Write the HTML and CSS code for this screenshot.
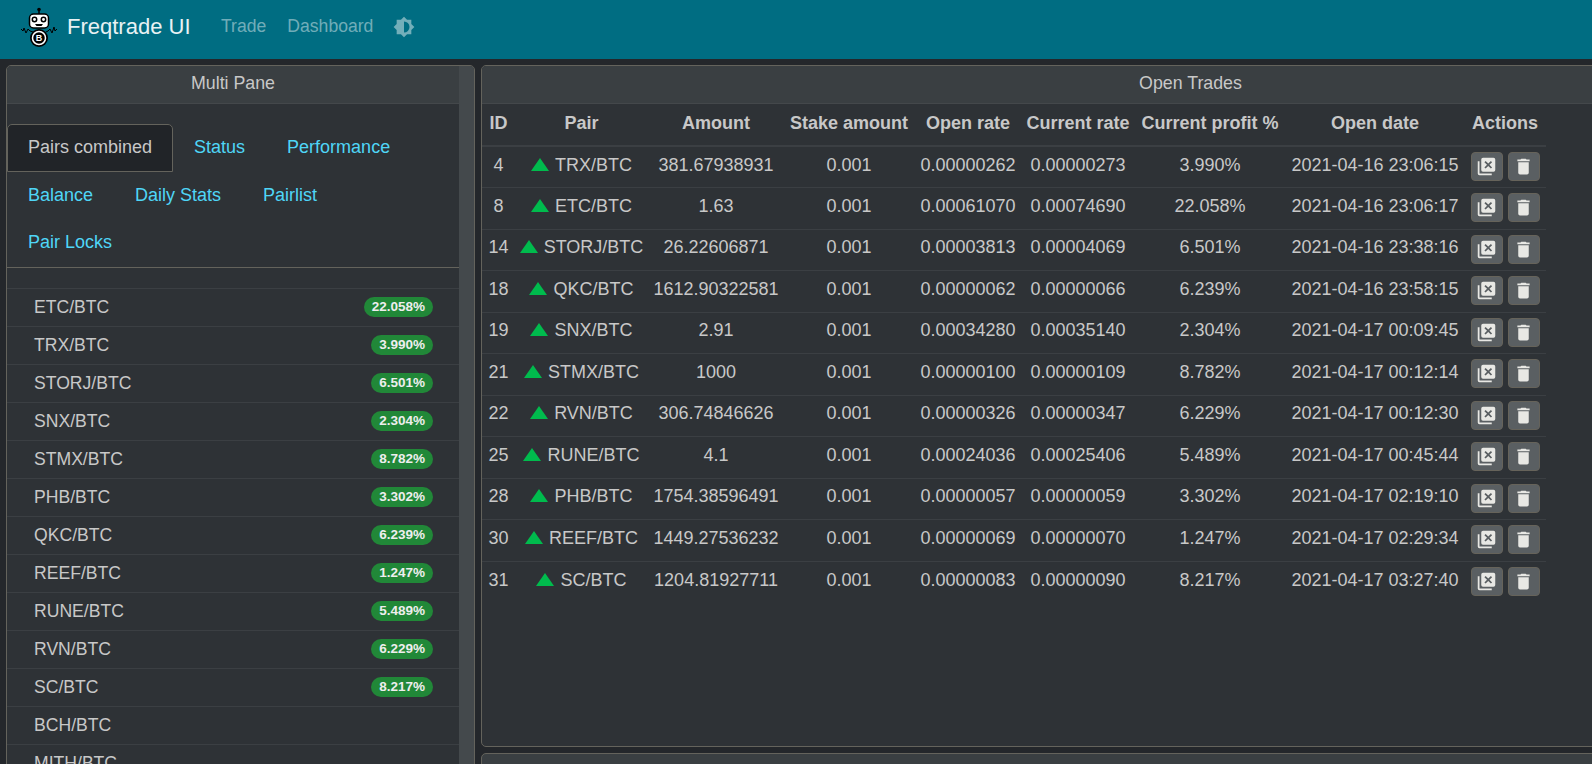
FILE: index.html
```html
<!DOCTYPE html>
<html lang="en">
<head>
	<meta charset="UTF-8">
	<title>Freqtrade UI</title>
	<link rel="stylesheet" href="styles.css">
</head>
<body>

	<nav class="navbar">
		<svg class="logo" width="38" height="40" viewBox="0 0 38 40">
			<path d="M19 1v6" stroke="#000" stroke-width="1.5"/>
			<circle cx="19" cy="2.5" r="1.8" fill="#000"/>
			<rect x="9.5" y="7" width="19" height="14" rx="4" fill="#fff" stroke="#000" stroke-width="1.5"/>
			<circle cx="14.5" cy="12.5" r="2.2" fill="#fff" stroke="#000" stroke-width="1.5"/>
			<circle cx="23.5" cy="12.5" r="2.2" fill="#fff" stroke="#000" stroke-width="1.5"/>
			<path d="M15 17h8l-1.5 2h-5z" fill="#000"/>
			<path d="M1 22l2 2 1-3 2 5 2-4 2 2 3 1M37 22l-2 2-1-4-2 6-2-4-2 2-2 1" fill="none" stroke="#000" stroke-width="1"/>
			<circle cx="19" cy="31" r="9" fill="#000"/>
			<circle cx="19" cy="31" r="6.5" fill="none" stroke="#fff" stroke-width="1.5"/>
			<text x="19" y="34" class="logo-b">B</text>
		</svg>
		<a class="brand" href="#">Freqtrade UI</a>
		<a class="nav-link" href="#">Trade</a>
		<a class="nav-link" href="#">Dashboard</a>
		<svg class="theme-icon" width="22" height="22" viewBox="0 0 24 24"><path d="M12,18V6A6,6 0 0,1 18,12A6,6 0 0,1 12,18M20,15.31L23.31,12L20,8.69V4H15.31L12,0.69L8.69,4H4V8.69L0.69,12L4,15.31V20H8.69L12,23.31L15.31,20H20V15.31Z"/></svg>
	</nav>

	<div class="layout">

		<section class="card pane-left">
			<div class="pane-content">
				<div class="card-header">Multi Pane</div>
				<div class="tabs">
					<a class="tab active" href="#">Pairs combined</a>
					<a class="tab" href="#">Status</a>
					<a class="tab" href="#">Performance</a>
					<a class="tab" href="#">Balance</a>
					<a class="tab" href="#">Daily Stats</a>
					<a class="tab" href="#">Pairlist</a>
					<a class="tab" href="#">Pair Locks</a>
				</div>
				<ul class="pair-list">
					<li>ETC/BTC <span class="badge">22.058%</span></li>
					<li>TRX/BTC <span class="badge">3.990%</span></li>
					<li>STORJ/BTC <span class="badge">6.501%</span></li>
					<li>SNX/BTC <span class="badge">2.304%</span></li>
					<li>STMX/BTC <span class="badge">8.782%</span></li>
					<li>PHB/BTC <span class="badge">3.302%</span></li>
					<li>QKC/BTC <span class="badge">6.239%</span></li>
					<li>REEF/BTC <span class="badge">1.247%</span></li>
					<li>RUNE/BTC <span class="badge">5.489%</span></li>
					<li>RVN/BTC <span class="badge">6.229%</span></li>
					<li>SC/BTC <span class="badge">8.217%</span></li>
					<li>BCH/BTC</li>
					<li>MITH/BTC</li>
				</ul>
			</div>
			<div class="pane-scroll"></div>
		</section>

		<div class="pane-right">
			<section class="card trades-card">
				<div class="card-header">Open Trades</div>
				<table class="trades">
					<colgroup>
						<col class="c-id"><col class="c-pair"><col class="c-amount"><col class="c-stake"><col class="c-open"><col class="c-current"><col class="c-profit"><col class="c-date"><col class="c-actions">
					</colgroup>
					<thead>
						<tr><th>ID</th><th>Pair</th><th>Amount</th><th>Stake amount</th><th>Open rate</th><th>Current rate</th><th>Current profit %</th><th>Open date</th><th>Actions</th></tr>
					</thead>
					<tbody>
						<tr><td>4</td><td><svg class="up" width="18" height="13" viewBox="0 0 18 13"><path d="M9 0l9 13H0z"/></svg>TRX/BTC</td><td>381.67938931</td><td>0.001</td><td>0.00000262</td><td>0.00000273</td><td>3.990%</td><td>2021-04-16 23:06:15</td><td><div class="actions"><button><svg width="21" height="21" viewBox="0 0 24 24"><use href="#ic-close"/></svg></button><button><svg width="21" height="21" viewBox="0 0 24 24"><use href="#ic-del"/></svg></button></div></td></tr>
						<tr><td>8</td><td><svg class="up" width="18" height="13" viewBox="0 0 18 13"><path d="M9 0l9 13H0z"/></svg>ETC/BTC</td><td>1.63</td><td>0.001</td><td>0.00061070</td><td>0.00074690</td><td>22.058%</td><td>2021-04-16 23:06:17</td><td><div class="actions"><button><svg width="21" height="21" viewBox="0 0 24 24"><use href="#ic-close"/></svg></button><button><svg width="21" height="21" viewBox="0 0 24 24"><use href="#ic-del"/></svg></button></div></td></tr>
						<tr><td>14</td><td><svg class="up" width="18" height="13" viewBox="0 0 18 13"><path d="M9 0l9 13H0z"/></svg>STORJ/BTC</td><td>26.22606871</td><td>0.001</td><td>0.00003813</td><td>0.00004069</td><td>6.501%</td><td>2021-04-16 23:38:16</td><td><div class="actions"><button><svg width="21" height="21" viewBox="0 0 24 24"><use href="#ic-close"/></svg></button><button><svg width="21" height="21" viewBox="0 0 24 24"><use href="#ic-del"/></svg></button></div></td></tr>
						<tr><td>18</td><td><svg class="up" width="18" height="13" viewBox="0 0 18 13"><path d="M9 0l9 13H0z"/></svg>QKC/BTC</td><td>1612.90322581</td><td>0.001</td><td>0.00000062</td><td>0.00000066</td><td>6.239%</td><td>2021-04-16 23:58:15</td><td><div class="actions"><button><svg width="21" height="21" viewBox="0 0 24 24"><use href="#ic-close"/></svg></button><button><svg width="21" height="21" viewBox="0 0 24 24"><use href="#ic-del"/></svg></button></div></td></tr>
						<tr><td>19</td><td><svg class="up" width="18" height="13" viewBox="0 0 18 13"><path d="M9 0l9 13H0z"/></svg>SNX/BTC</td><td>2.91</td><td>0.001</td><td>0.00034280</td><td>0.00035140</td><td>2.304%</td><td>2021-04-17 00:09:45</td><td><div class="actions"><button><svg width="21" height="21" viewBox="0 0 24 24"><use href="#ic-close"/></svg></button><button><svg width="21" height="21" viewBox="0 0 24 24"><use href="#ic-del"/></svg></button></div></td></tr>
						<tr><td>21</td><td><svg class="up" width="18" height="13" viewBox="0 0 18 13"><path d="M9 0l9 13H0z"/></svg>STMX/BTC</td><td>1000</td><td>0.001</td><td>0.00000100</td><td>0.00000109</td><td>8.782%</td><td>2021-04-17 00:12:14</td><td><div class="actions"><button><svg width="21" height="21" viewBox="0 0 24 24"><use href="#ic-close"/></svg></button><button><svg width="21" height="21" viewBox="0 0 24 24"><use href="#ic-del"/></svg></button></div></td></tr>
						<tr><td>22</td><td><svg class="up" width="18" height="13" viewBox="0 0 18 13"><path d="M9 0l9 13H0z"/></svg>RVN/BTC</td><td>306.74846626</td><td>0.001</td><td>0.00000326</td><td>0.00000347</td><td>6.229%</td><td>2021-04-17 00:12:30</td><td><div class="actions"><button><svg width="21" height="21" viewBox="0 0 24 24"><use href="#ic-close"/></svg></button><button><svg width="21" height="21" viewBox="0 0 24 24"><use href="#ic-del"/></svg></button></div></td></tr>
						<tr><td>25</td><td><svg class="up" width="18" height="13" viewBox="0 0 18 13"><path d="M9 0l9 13H0z"/></svg>RUNE/BTC</td><td>4.1</td><td>0.001</td><td>0.00024036</td><td>0.00025406</td><td>5.489%</td><td>2021-04-17 00:45:44</td><td><div class="actions"><button><svg width="21" height="21" viewBox="0 0 24 24"><use href="#ic-close"/></svg></button><button><svg width="21" height="21" viewBox="0 0 24 24"><use href="#ic-del"/></svg></button></div></td></tr>
						<tr><td>28</td><td><svg class="up" width="18" height="13" viewBox="0 0 18 13"><path d="M9 0l9 13H0z"/></svg>PHB/BTC</td><td>1754.38596491</td><td>0.001</td><td>0.00000057</td><td>0.00000059</td><td>3.302%</td><td>2021-04-17 02:19:10</td><td><div class="actions"><button><svg width="21" height="21" viewBox="0 0 24 24"><use href="#ic-close"/></svg></button><button><svg width="21" height="21" viewBox="0 0 24 24"><use href="#ic-del"/></svg></button></div></td></tr>
						<tr><td>30</td><td><svg class="up" width="18" height="13" viewBox="0 0 18 13"><path d="M9 0l9 13H0z"/></svg>REEF/BTC</td><td>1449.27536232</td><td>0.001</td><td>0.00000069</td><td>0.00000070</td><td>1.247%</td><td>2021-04-17 02:29:34</td><td><div class="actions"><button><svg width="21" height="21" viewBox="0 0 24 24"><use href="#ic-close"/></svg></button><button><svg width="21" height="21" viewBox="0 0 24 24"><use href="#ic-del"/></svg></button></div></td></tr>
						<tr><td>31</td><td><svg class="up" width="18" height="13" viewBox="0 0 18 13"><path d="M9 0l9 13H0z"/></svg>SC/BTC</td><td>1204.81927711</td><td>0.001</td><td>0.00000083</td><td>0.00000090</td><td>8.217%</td><td>2021-04-17 03:27:40</td><td><div class="actions"><button><svg width="21" height="21" viewBox="0 0 24 24"><use href="#ic-close"/></svg></button><button><svg width="21" height="21" viewBox="0 0 24 24"><use href="#ic-del"/></svg></button></div></td></tr>
					</tbody>
				</table>
			</section>
			<section class="card next-card"></section>
		</div>

	</div>

	<svg class="icon-defs" width="0" height="0">
		<symbol id="ic-close" viewBox="0 0 24 24">
			<path d="M4 6H2V20A2 2 0 0 0 4 22H18V20H4V6Z"/>
			<path fill-rule="evenodd" d="M8 2H20A2 2 0 0 1 22 4V16A2 2 0 0 1 20 18H8A2 2 0 0 1 6 16V4A2 2 0 0 1 8 2ZM11 5.6L9.6 7L12.6 10L9.6 13L11 14.4L14 11.4L17 14.4L18.4 13L15.4 10L18.4 7L17 5.6L14 8.6Z"/>
		</symbol>
		<symbol id="ic-del" viewBox="0 0 24 24">
			<path d="M19,4H15.5L14.5,3H9.5L8.5,4H5V6H19V4M6,19A2,2 0 0,0 8,21H16A2,2 0 0,0 18,19V7H6V19Z"/>
		</symbol>
	</svg>

</body>
</html>
```

FILE: styles.css
```css
html, body {
	height: 100%;
}
body {
	margin: 0;
	overflow: hidden;
	background: #24272b;
	color: #c8c8c8;
	font-family: "Liberation Sans", Arial, sans-serif;
	font-size: 17.6px;
	line-height: 1.5;
}
a {
	text-decoration: none;
}

/* top bar */
.navbar {
	display: flex;
	align-items: center;
	height: 59px;
	padding: 0 0 6px 20px;
	background: #006d82;
	box-sizing: border-box;
}
.logo {
	margin-right: 9px;
}
.logo-b {
	font-family: "Liberation Sans", Arial, sans-serif;
	font-size: 9px;
	font-weight: bold;
	fill: #fff;
	text-anchor: middle;
}
.brand {
	margin-right: 20px;
	font-size: 22px;
	color: #e8f2f4;
}
.nav-link {
	padding: 0 10.5px;
	color: rgba(255, 255, 255, 0.45);
}
.theme-icon {
	margin-left: 9.5px;
	fill: rgba(255, 255, 255, 0.45);
}

/* main area */
.layout {
	display: flex;
	gap: 6px;
	padding: 6px 0 0 6px;
	height: 705px;
	box-sizing: border-box;
}
.card {
	background: #2e3236;
	border: 1px solid #64635c;
	border-radius: 5px;
	box-sizing: border-box;
	overflow: hidden;
}
.card-header {
	height: 38px;
	line-height: 34px;
	text-align: center;
	font-size: 17.8px;
	background: #3a3f42;
	border-bottom: 1px solid #44484b;
	box-sizing: border-box;
}
.pane-left {
	display: flex;
	flex: none;
	width: 469px;
	height: 760px;
}
.pane-content {
	flex: 1;
	min-width: 0;
}
.pane-scroll {
	flex: none;
	width: 15px;
	background: #44494c;
}
.pane-right {
	display: flex;
	flex-direction: column;
	gap: 6px;
	flex: none;
	width: 1419px;
}
.trades-card {
	flex: none;
	height: 682px;
}
.next-card {
	flex: none;
	height: 60px;
	background: #3a3f42;
}

/* tabs */
.tabs {
	display: flex;
	flex-wrap: wrap;
	padding-top: 20px;
	font-size: 18px;
	border-bottom: 1px solid #64635c;
}
.tab {
	height: 47.6px;
	padding: 0 20px;
	line-height: 44px;
	color: #4fd6f7;
	border: 1px solid transparent;
	box-sizing: border-box;
}
.tab.active {
	color: #c8c8c8;
	background: #212428;
	border-color: #64635c;
	border-radius: 5px 5px 0 0;
}

/* pair list */
.pair-list {
	margin: 20px 0 0;
	padding: 0;
	list-style: none;
}
.pair-list li {
	display: flex;
	align-items: center;
	justify-content: space-between;
	height: 38px;
	padding: 0 26px 0 27px;
	border-top: 1px solid #3b3f43;
	box-sizing: border-box;
}
.badge {
	padding: 0 8px;
	font-size: 13.5px;
	font-weight: bold;
	line-height: 20px;
	color: #eee;
	background: #218838;
	border-radius: 10px;
}

/* trades table */
.trades {
	width: 1064px;
	table-layout: fixed;
	border-collapse: collapse;
	font-size: 18px;
}
.c-id { width: 33px; }
.c-pair { width: 133px; }
.c-amount { width: 136px; }
.c-stake { width: 130px; }
.c-open { width: 108px; }
.c-current { width: 112px; }
.c-profit { width: 152px; }
.c-date { width: 178px; }
.c-actions { width: 82px; }
.trades th, .trades td {
	padding: 0;
	text-align: center;
	white-space: nowrap;
}
.trades th {
	height: 39px;
	padding-bottom: 2px;
	font-weight: bold;
}
.trades td {
	height: 41.5px;
	line-height: 20px;
	padding-bottom: 5px;
	border-bottom: 1px solid #3b3f43;
	box-sizing: border-box;
}
.trades tbody tr:last-child td {
	border-bottom: none;
}
.trades thead tr {
	border-bottom: 2px solid #3b3f43;
}
.up {
	margin-right: 6px;
	fill: #00bb4d;
}
.actions {
	display: flex;
	justify-content: center;
	gap: 5px;
	margin-top: 4px;
}
.actions button {
	display: flex;
	align-items: center;
	justify-content: center;
	width: 32px;
	height: 29px;
	padding: 0;
	background: #5a5f62;
	border: 1px solid #66635a;
	border-radius: 4px;
}
.actions svg {
	fill: #e8e8e4;
}
.icon-defs {
	position: absolute;
}
```
